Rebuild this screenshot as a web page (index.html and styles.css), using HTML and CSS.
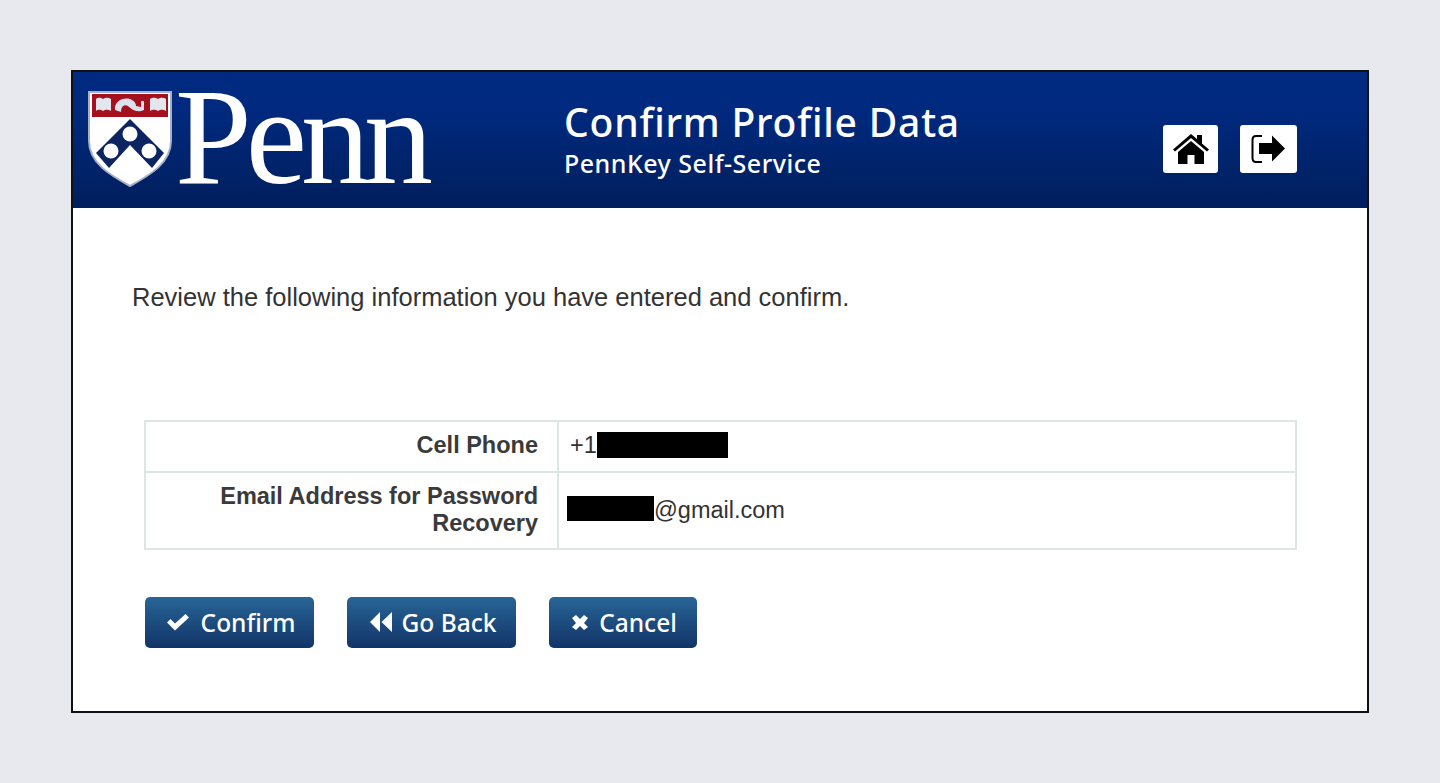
FILE: index.html
```html
<!DOCTYPE html>
<html lang="en">
<head>
    <meta charset="UTF-8">
    <meta name="viewport" content="width=device-width, initial-scale=1.0">
    <title>Confirm Profile Data</title>
    <link rel="stylesheet" href="styles.css">
</head>
<body>
    <div class="panel">
        <div class="header">
            <div class="logo">
                <svg class="shield" width="85" height="96" viewBox="0 0 85 96">
                    <path d="M1 1H83V50C83 72 62 84 42 95C22 84 1 72 1 50Z" fill="#fff" stroke="#a9b1c6" stroke-width="2"/>
                    <rect x="4" y="3" width="76" height="23" fill="#a5101f"/>
                    <path d="M8 8C11 6 13 7 15 8C17 7 20 6 23 8V20C20 18 17 19 15 20C13 19 11 18 8 20ZM62 8C65 6 68 7 70 8C72 7 75 6 78 8V20C75 18 72 19 70 20C68 19 65 18 62 20Z" fill="#e4e6ee"/>
                    <path d="M27 19C26 11 34 6 42 8C47 10 48 13 48 15L53 16L53 10H56L56 19C49 22 44 19 40 15C36 13 33 16 33 21Z" fill="#dfe1ea"/>
                    <path d="M42 28L76 62L64 77L42 54L21 77L8 62Z" fill="#0c2461"/>
                    <circle cx="42" cy="43" r="7.500" fill="#fff"/>
                    <circle cx="23" cy="60" r="7.500" fill="#fff"/>
                    <circle cx="61" cy="60" r="7.500" fill="#fff"/>
                </svg>
                <span class="wordmark">Penn</span>
            </div>
            <div class="titles">
                <h1>Confirm Profile Data</h1>
                <h2>PennKey Self-Service</h2>
            </div>
            <div class="header-icons">
                <a class="icon-btn home-btn" href="#" aria-label="Home">
                    <svg width="36" height="32" viewBox="0 0 36 32">
                        <path d="M0 16.500L18 1L24 6V2H29V10.500L36 16.500L34 18.500L18 5L2 18.500Z" fill="#000"/>
                        <path d="M5 19L18 8L31 19V31H21.500V22H14.500V31H5Z" fill="#000"/>
                    </svg>
                </a>
                <a class="icon-btn exit-btn" href="#" aria-label="Log out">
                    <svg width="36" height="32" viewBox="0 0 36 32">
                        <path d="M11 3H5C3 3 1.500 4.500 1.500 7V25C1.500 27.500 3 29 5 29H11" fill="none" stroke="#000" stroke-width="2"/>
                        <path d="M8 10H21V2.500L34 15.500L21 28.500V21H8Z" fill="#000"/>
                    </svg>
                </a>
            </div>
        </div>

        <div class="content">
            <p class="intro">Review the following information you have entered and confirm.</p>

            <table class="review">
                <tr class="row-phone">
                    <th>Cell Phone</th>
                    <td class="phone">+1<span class="redact redact-phone"></span></td>
                </tr>
                <tr class="row-email">
                    <th>Email Address for Password Recovery</th>
                    <td class="email"><span class="redact redact-email"></span>@gmail.com</td>
                </tr>
            </table>

            <div class="actions">
                <a class="btn btn-confirm" href="#">
                    <svg width="24" height="18" viewBox="0 0 24 18"><path d="M1 9.500L4.500 6L9 10.500L19.500 1L23 4.500L9 17.500Z" fill="#fff"/></svg>
                    Confirm
                </a>
                <a class="btn btn-back" href="#">
                    <svg width="24" height="22" viewBox="0 0 24 22"><path d="M11 1V21L1 11ZM23 1V21L12.500 11Z" fill="#fff"/></svg>
                    Go Back
                </a>
                <a class="btn btn-cancel" href="#">
                    <svg width="18" height="18" viewBox="0 0 18 18"><path d="M1 5L5 2L9 6L13 2L17 5L13 10L17 14L13 17L9 13L5 17L1 14L5 10Z" fill="#fff"/></svg>
                    Cancel
                </a>
            </div>
        </div>
    </div>
</body>
</html>
```

FILE: styles.css
```css
* {
    box-sizing: border-box;
}
body {
    margin: 0;
    padding: 70px 71px;
    height: 783px;
    overflow: hidden;
    background-color: #e7e9ee;
    font-family: 'Liberation Sans', Arial, sans-serif;
    color: #333;
}
.panel {
    height: 643px;
    background-color: #fff;
    border: 2px solid #111;
}
.header {
    display: flex;
    align-items: flex-start;
    height: 136px;
    background: linear-gradient(to bottom, #002a80, #002a80 25%, #001e5c);
    color: #fff;
}
.logo {
    display: flex;
    width: 491px;
    padding: 19px 0 0 15px;
}
.shield {
    flex: none;
}
.wordmark {
    margin: -17px 0 0 2px;
    font-family: 'Liberation Serif', serif;
    font-size: 138px;
    line-height: 126px;
    letter-spacing: -6px;
}
.titles {
    width: 599px;
    padding-top: 27px;
}
h1 {
    margin: 0;
    font-family: 'Noto Sans', sans-serif;
    font-size: 39px;
    font-weight: 500;
    line-height: 46px;
    letter-spacing: 0.8px;
}
h2 {
    margin: 0;
    font-family: 'Noto Sans', sans-serif;
    font-size: 25px;
    font-weight: 500;
    line-height: 36px;
    letter-spacing: 0.5px;
}
.header-icons {
    display: flex;
    gap: 22px;
    padding-top: 53px;
}
.icon-btn {
    display: flex;
    align-items: center;
    justify-content: center;
    width: 55px;
    height: 48px;
    background-color: #fff;
    border-radius: 3px;
}
.exit-btn {
    width: 57px;
}
.content {
    padding: 72px 71px 0 59px;
}
.intro {
    margin: 0 0 106px;
    font-size: 25.500px;
    line-height: 34px;
}
.review {
    width: 1153px;
    margin-left: 12px;
    border-collapse: collapse;
    font-size: 23.500px;
    line-height: 27px;
}
.review th, .review td {
    border: 2px solid #dde5e5;
    padding-right: 19px;
}
.row-phone th, .row-phone td {
    height: 51px;
    padding-top: 10px;
    padding-bottom: 12px;
}
.row-email th, .row-email td {
    height: 77px;
    padding-top: 10px;
    padding-bottom: 11px;
}
.review th {
    width: 413px;
    text-align: right;
    color: #3a3a3a;
}
.review .phone {
    padding-left: 11px;
}
.review .email {
    padding-left: 8px;
}
.redact {
    display: inline-block;
    background-color: #000;
}
.redact-phone {
    width: 131px;
    height: 26px;
    vertical-align: -5px;
}
.redact-email {
    width: 87px;
    height: 25px;
    vertical-align: -3px;
}
.actions {
    display: flex;
    gap: 33px;
    margin: 47px 0 0 13px;
}
.btn {
    display: flex;
    align-items: center;
    justify-content: center;
    gap: 11px;
    width: 169px;
    height: 51px;
    padding-left: 2px;
    padding-bottom: 1px;
    background: linear-gradient(to bottom, #286596, #123468);
    border-radius: 5px;
    color: #fff;
    font-family: 'Noto Sans', sans-serif;
    font-size: 24.500px;
    font-weight: 500;
    text-decoration: none;
}
.btn-back {
    gap: 9px;
}
.btn-cancel {
    gap: 10px;
    width: 148px;
}
```
